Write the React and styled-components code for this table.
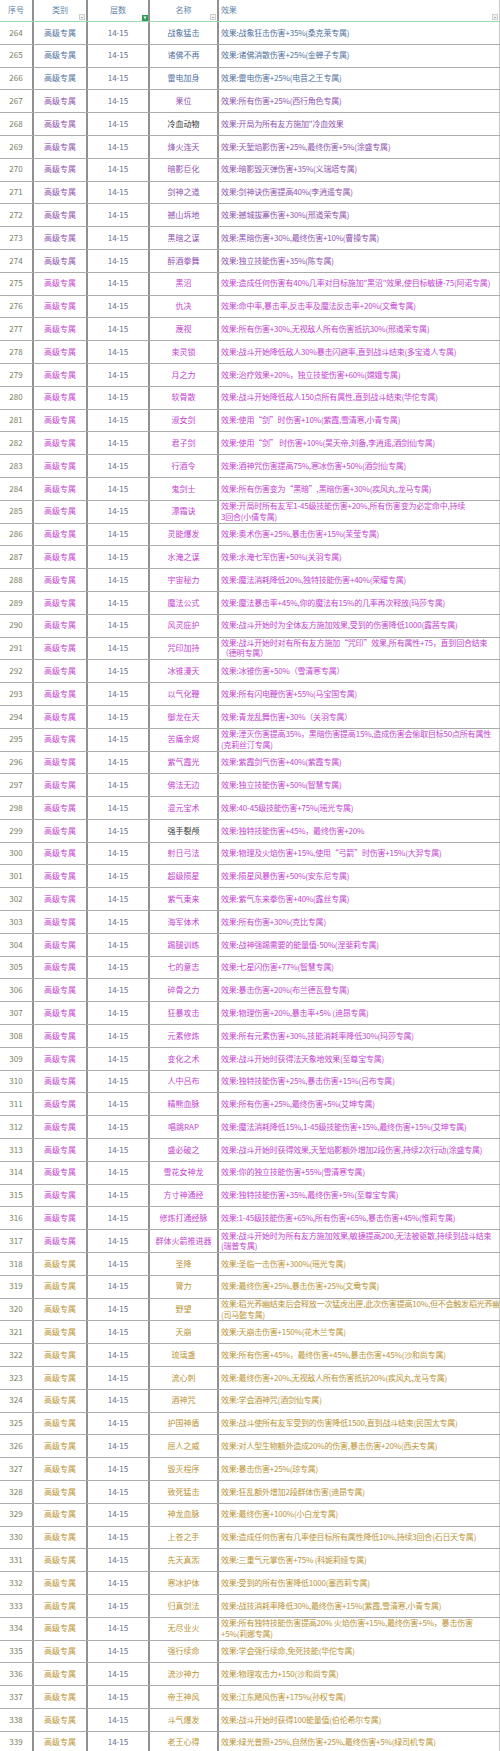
import React from 'react'
import styled, { createGlobalStyle } from 'styled-components'

const Global = createGlobalStyle`
html, body {
    margin: 0;
    padding: 0;
    background: #ffffff;
}
body {
    font-family: "Noto Sans CJK SC", "Noto Sans", sans-serif;
}
`

const colors = {
    blue: '#5071a0',
    purple: '#9052b0',
    magenta: '#c443d1',
    gold: '#bb9334',
    ink: '#333333',
    seq: '#77805c',
    level: '#5f6f8d',
}

const Sheet = styled.div`
width: 500px;
height: 1751px;
overflow: hidden;
background: #fff;
font-size: 8px;
`

const Grid = styled.div`
display: grid;
grid-template-columns: 34px 54px 62px 69px 1fr;
height: ${({head}) => head ? '22px' : '22.8px'};
box-sizing: border-box;
border-bottom: 1px solid ${({head}) => head ? '#9fd6b2' : '#ababab'};
`

const Cell = styled.div`
position: relative;
display: flex;
align-items: center;
justify-content: ${({left}) => left ? 'flex-start' : 'center'};
padding-left: ${({left}) => left ? '2px' : '0'};
letter-spacing: ${({left}) => left ? '-0.2px' : '0'};
box-sizing: border-box;
border-right: 2px solid #909090;
overflow: hidden;
white-space: pre;
line-height: 10.5px;
color: ${({c}) => c};

&:last-child{
    border-right: 1px solid #c8c8c8;
}
`

const HeadCell = styled(Cell)`
color: #6285a8;
padding-bottom: 1px;
`

const Drop = styled.span`
position: absolute;
right: 1px;
bottom: 1px;
width: 4px;
height: 4px;
border: 0.5px solid #cfcfcf;
background: #f4f4f4;

&::after{
    content: '';
    position: absolute;
    left: 1px;
    top: 1.5px;
    border-left: 1px solid transparent;
    border-right: 1px solid transparent;
    border-top: 1px solid #666;
}
`

const Filter = styled.span`
position: absolute;
right: 0px;
bottom: 0px;
width: 6px;
height: 6px;
background: #2f9a55;
display: flex;
align-items: center;
justify-content: center;
`

const tierOf = (n) => {
    if (n <= 266) return 'blue'
    if (n <= 274) return 'purple'
    if (n <= 317) return 'magenta'
    return 'gold'
}

const rows = [
    ['战象猛击', '效果:战象狂击伤害+35%(桑克莱专属)'],
    ['诸佛不再', '效果:诸佛消散伤害+25%(金蝉子专属)'],
    ['雷电加身', '效果:雷电伤害+25%(电音之王专属)'],
    ['果位', '效果:所有伤害+25%(西行角色专属)'],
    ['冷血动物', '效果:开局为所有友方施加"冷血效果', true],
    ['烽火连天', '效果:天堑焰影伤害+25%,最终伤害+5%(涂盛专属)'],
    ['暗影巨化', '效果:暗影毁灭弹伤害+35%(义瑞塔专属)'],
    ['剑神之道', '效果:剑神诀伤害提高40%(李逍遥专属)'],
    ['撼山坼地', '效果:撼城拔寨伤害+30%(邢道荣专属)'],
    ['黑暗之谋', '效果:黑暗伤害+30%,最终伤害+10%(曹操专属)'],
    ['醉酒拳舞', '效果:独立技能伤害+35%(陈专属)'],
    ['黑沼', '效果:造成任何伤害有40%几率对目标施加"黑沼"效果,使目标敏捷-75(阿诺专属)'],
    ['仇决', '效果:命中率,暴击率,反击率及魔法反击率+20%(文鸯专属)'],
    ['蔑视', '效果:所有伤害+30%,无视敌人所有伤害抵抗30%(邢道荣专属)'],
    ['束灵锁', '效果:战斗开始降低敌人30%暴击闪避率,直到战斗结束(多宝道人专属)'],
    ['月之力', '效果:治疗效果+20%，独立技能伤害+60%(嫦娥专属)'],
    ['软骨散', '效果:战斗开始降低敌人150点所有属性,直到战斗结束(华佗专属)'],
    ['淑女剑', '效果:使用“剑”时伤害+10%(紫霞,雪清寒,小青专属)'],
    ['君子剑', '效果:使用“剑” 时伤害+10%(昊天帝,刘备,李逍遥,酒剑仙专属)'],
    ['行酒令', '效果:酒神咒伤害提高75%,寒冰伤害+50%(酒剑仙专属)'],
    ['鬼剑士', '效果:所有伤害变为“黑暗”,黑暗伤害+30%(疾风丸,龙马专属)'],
    ['漂霜诀', '效果:开局时所有友军1-45级技能伤害+20%,所有伤害变为必定命中,持续\n3回合(小倩专属)'],
    ['灵能爆发', '效果:奥术伤害+25%,暴击伤害+15%(茉莹专属)'],
    ['水淹之谋', '效果:水淹七军伤害+50%(关羽专属)'],
    ['宇宙秘力', '效果:魔法消耗降低20%,独特技能伤害+40%(荣耀专属)'],
    ['魔法公式', '效果:魔法暴击率+45%,你的魔法有15%的几率再次释放(玛莎专属)'],
    ['风灵庇护', '效果:战斗开始时为全体友方施加效果,受到的伤害降低1000(露茜专属)'],
    ['咒印加持', '效果:战斗开始时对有所有友方施加“咒印”效果,所有属性+75，直到回合结束\n（德明专属）'],
    ['冰锥漫天', '效果:冰锥伤害+50%（雪清寒专属）'],
    ['以气化鞭', '效果:所有闪电鞭伤害+55%(马宝国专属)'],
    ['御龙在天', '效果:青龙乱舞伤害+30%（关羽专属）'],
    ['苦痛余烬', '效果:湮灭伤害提高35%，黑暗伤害提高15%,造成伤害会偷取目标50点所有属性\n(克莉丝汀专属)'],
    ['紫气霞光', '效果:紫霞剑气伤害+40%(紫霞专属)'],
    ['佛法无边', '效果:独立技能伤害+50%(智慧专属)'],
    ['混元宝术', '效果:40-45级技能伤害+75%(瑶光专属)'],
    ['强手裂颅', '效果:独特技能伤害+45%，最终伤害+20%', true],
    ['射日弓法', '效果:物理及火焰伤害+15%,使用“弓箭”时伤害+15%(大羿专属)'],
    ['超级陨星', '效果:陨星风暴伤害+50%(安东尼专属)'],
    ['紫气東来', '效果:紫气东来拳伤害+40%(露丝专属)'],
    ['海军体术', '效果:所有伤害+30%(克比专属)'],
    ['踢腿训练', '效果:战神强踢需要的能量值-50%(涅斐莉专属)'],
    ['七的意志', '效果:七星闪伤害+77%(智慧专属)'],
    ['碎骨之力', '效果:暴击伤害+20%(布兰德瓦登专属)'],
    ['狂暴攻击', '效果:物理伤害+20%,暴击率+5% (迪昂专属)'],
    ['元素修炼', '效果:所有元素伤害+30%,技能消耗率降低30%(玛莎专属)'],
    ['变化之术', '效果:战斗开始时获得法天象地效果(至尊宝专属)'],
    ['人中吕布', '效果:独特技能伤害+25%,暴击伤害+15%(吕布专属)'],
    ['精熊血脉', '效果:所有伤害+25%,最终伤害+5%(艾坤专属)'],
    ['唱跳RAP', '效果:魔法消耗降低15%,1-45级技能伤害+15%,最终伤害+15%(艾坤专属)'],
    ['盛必破之', '效果:战斗开始时获得效果,天堑焰影额外增加2段伤害,持续2次行动(涂盛专属)'],
    ['雪花女神龙', '效果:你的独立技能伤害+55%(雪清寒专属)'],
    ['方寸神通经', '效果:独特技能伤害+35%,最终伤害+5%(至尊宝专属)'],
    ['修炼打通经脉', '效果:1-45级技能伤害+65%,所有伤害+65%,暴击伤害+45%(惟莉专属)'],
    ['群体火箭推进器', '效果:战斗开始时为所有友方施加效果,敏捷提高200,无法被驱散,持续到战斗结束\n(瑞普专属)'],
    ['圣降', '效果:圣临一击伤害+300%(瑶光专属)'],
    ['膂力', '效果:最终伤害+25%,暴击伤害+25%(文鸯专属)'],
    ['野望', '效果:稻光荞幽结束后会释放一次猛虎出匣,此次伤害提高10%,但不会触发稻光荞幽\n(司马懿专属)'],
    ['天崩', '效果:天崩击伤害+150%(花木兰专属)'],
    ['琉璃盏', '效果:所有伤害+45%，最终伤害+45%,暴击伤害+45%(沙和尚专属)'],
    ['流心刺', '效果:最终伤害+20%,无视敌人所有伤害抵抗20%(疾风丸,龙马专属)'],
    ['酒神咒', '效果:学会酒神咒(酒剑仙专属)'],
    ['护国神盾', '效果:战斗使所有友军受到的伤害降低1500,直到战斗结束(民国太专属)'],
    ['屈人之威', '效果:对人型生物额外造成20%的伤害,暴击伤害+20%(西夫专属)'],
    ['毁灭程序', '效果:暴击伤害+25%(琼专属)'],
    ['致死猛击', '效果:狂乱额外增加2段群体伤害(迪昂专属)'],
    ['神龙血脉', '效果:最终伤害+100%(小白龙专属)'],
    ['上苍之手', '效果:造成任何伤害有几率使目标所有属性降低10%,持续3回合(石日天专属)'],
    ['先天真炁', '效果:三重气元掌伤害+75% (科妮莉娅专属)'],
    ['寒冰护体', '效果:受到的所有伤害降低1000(塞西莉专属)'],
    ['归真剑法', '效果:战技消耗率降低30%,最终伤害+15%(紫霞,雪清寒,小青专属)'],
    ['无尽业火', '效果:所有独特技能伤害提高20% 火焰伤害+15%,最终伤害+5%，暴击伤害\n+5%(莉娜专属)'],
    ['强行续命', '效果:学会强行续命,免死技能(华佗专属)'],
    ['流沙神力', '效果:物理攻击力+150(沙和尚专属)'],
    ['帝王神风', '效果:江东飓风伤害+175%(孙权专属)'],
    ['斗气爆发', '效果:战斗开始时获得100能量值(伯伦希尔专属)'],
    ['老王心得', '效果:绿光普照+25%,自然伤害+25%,最终伤害+5%(绿司机专属)'],
]

const FilterIcon = () => (
    <Filter>
        <svg width="4" height="4" viewBox="0 0 4 4">
            <path d="M0.3 0.6 H3.7 L2.4 2 V3.6 L1.6 3.2 V2 Z" fill="#fff" />
        </svg>
    </Filter>
)

const Header = () => (
    <Grid head>
        <HeadCell>序号</HeadCell>
        <HeadCell>类别<Drop /></HeadCell>
        <HeadCell>层数<FilterIcon /></HeadCell>
        <HeadCell>名称<Drop /></HeadCell>
        <HeadCell left>效果<Drop /></HeadCell>
    </Grid>
)

const Row = ({n, name, effect, plain}) => {
    const c = colors[tierOf(n)]
    return (
        <Grid>
            <Cell c={colors.seq}>{n}</Cell>
            <Cell c={c}>高级专属</Cell>
            <Cell c={colors.level}>14-15</Cell>
            <Cell c={plain ? colors.ink : c}>{name}</Cell>
            <Cell left c={c}>{effect}</Cell>
        </Grid>
    )
}

const App = () => {
    return (
        <Sheet>
            <Global />
            <Header />
            {rows.map(([name, effect, plain], i) => (
                <Row key={i} n={264 + i} name={name} effect={effect} plain={plain} />
            ))}
        </Sheet>
    )
}

export default App
